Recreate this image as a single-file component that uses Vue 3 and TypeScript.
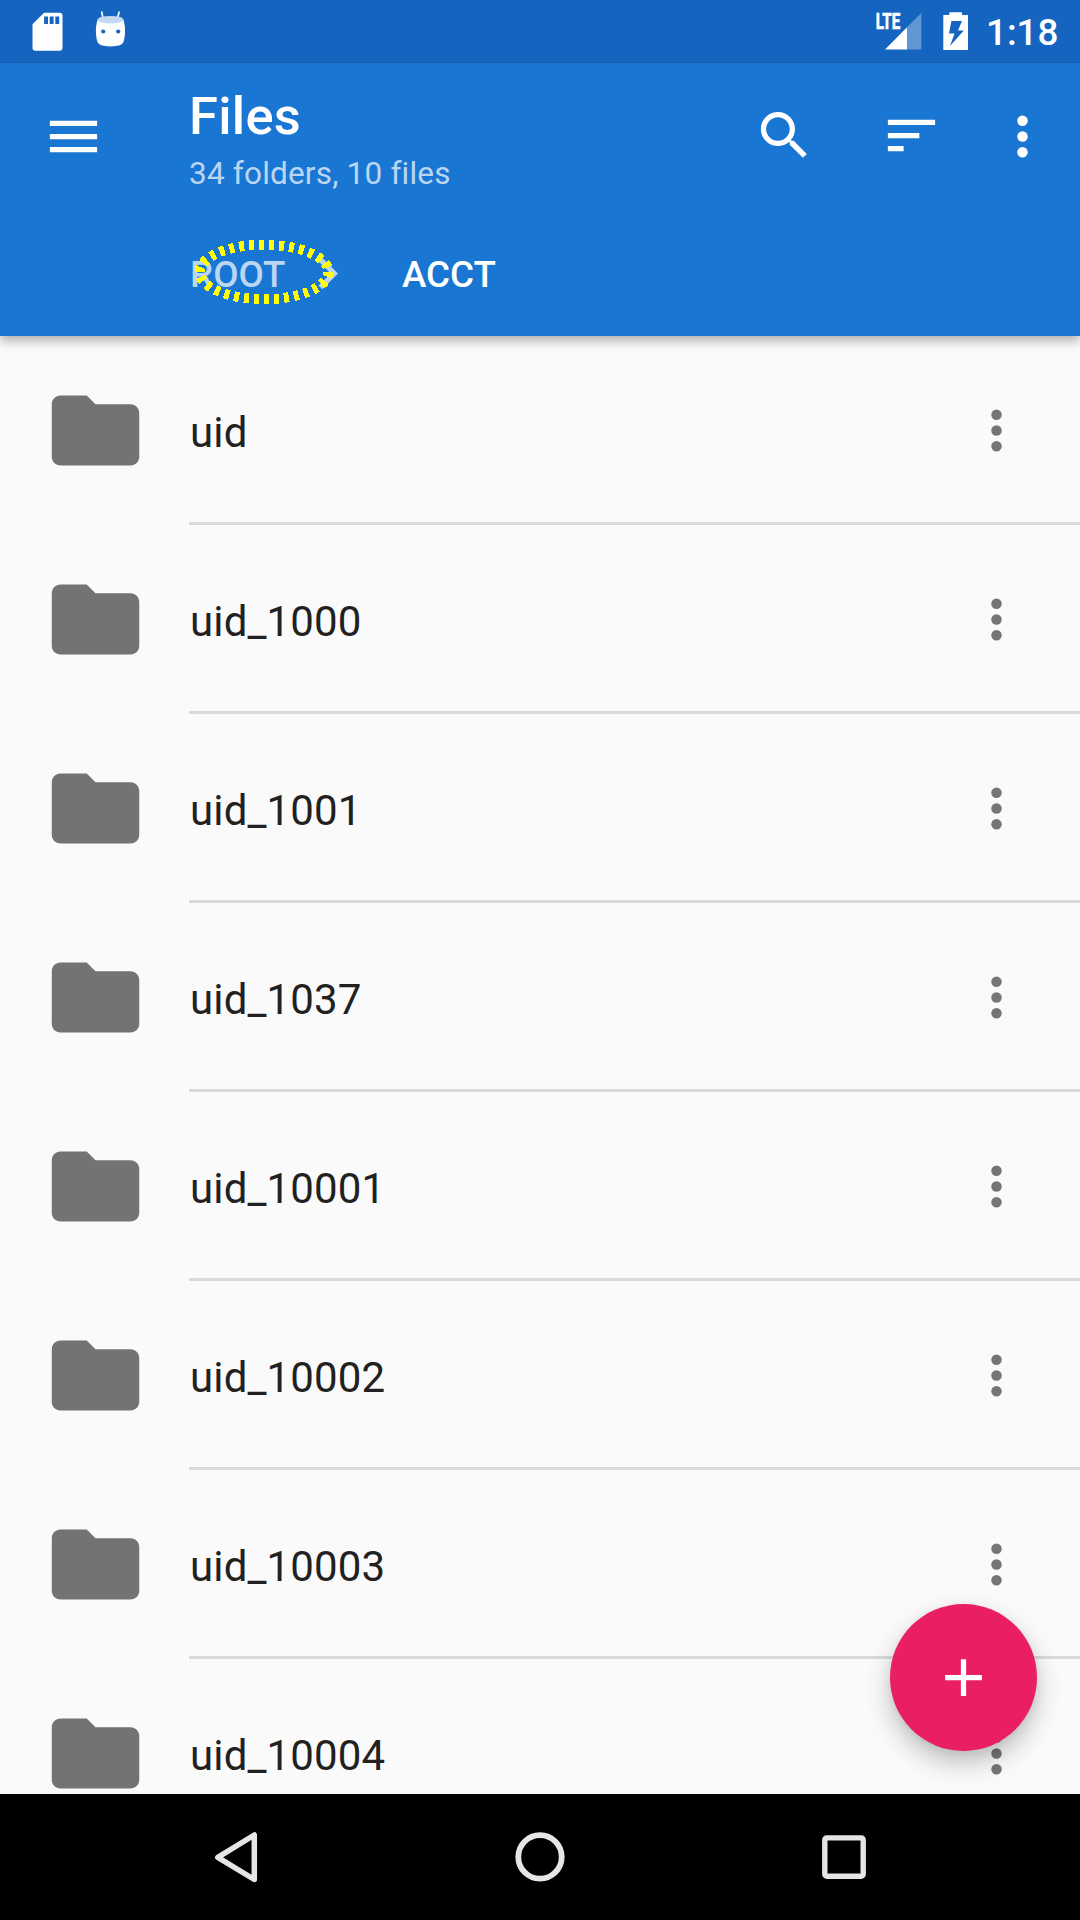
<script setup lang="ts">
const folders: string[] = [
  'uid',
  'uid_1000',
  'uid_1001',
  'uid_1037',
  'uid_10001',
  'uid_10002',
  'uid_10003',
  'uid_10004',
]
</script>

<template>
  <div class="screen">
    <div class="status">
      <svg class="sd" width="32" height="40" viewBox="-0.500 0 32 40">
        <path fill="#fff" fill-rule="evenodd" d="M12.600 .7H28q3 0 3 3v32q0 3-3 3H4q-3 0-3-3V12.300zM12.600 4.500v7.500h3.900V4.500zM18.200 4.500v7.500h3.900V4.500zM23.800 4.500v7.500h3.900V4.500z" />
      </svg>
      <svg class="droid" width="34" height="38" viewBox="-0.500 0 34 38">
        <path stroke="#fff" stroke-width="1.700" stroke-linecap="round" fill="none" d="M8.300 2.200 9.700 10M25.600 2.200 23.500 10" />
        <path fill="#fff" d="M4 10C2 16 1.800 25 4 32q1 4 13 4.500Q29 36 30 32c2.200-7 2-16 0-22z" />
        <ellipse cx="17" cy="9.800" rx="13" ry="3.800" fill="#c4d8f0" />
        <circle cx="9.700" cy="21.500" r="2.100" fill="#1565c0" />
        <circle cx="24.700" cy="21.500" r="2.100" fill="#1565c0" />
      </svg>
      <span class="grow"></span>
      <svg class="signal" width="48" height="50" viewBox="0 -10 48 50">
        <path fill="#fff" d="M11 39.500 33 17.300V39.500z" />
        <path fill="#fff" fill-opacity=".32" d="M33 17.300 47.300 3v36.500H33z" />
        <text x="1.800" y="19.300" textLength="24.500" lengthAdjust="spacingAndGlyphs" class="lte">LTE</text>
      </svg>
      <svg class="battery" width="26" height="40" viewBox="0 0 26 40">
        <path fill="#fff" fill-rule="evenodd" d="M.300 5H6.300V2.200H19V5h6v35H.300zM8.400 11 6 23.500h5.500L7 36 20.800 20.500H15L19 11z" />
      </svg>
      <span class="clock">1:18</span>
    </div>

    <header class="appbar">
      <div class="toolbar">
        <svg class="menu" width="63" height="63" viewBox="0 0 24 24" fill="#fff">
          <path d="M3 18h18v-2H3v2zm0-5h18v-2H3v2zm0-7v2h18V6H3z" />
        </svg>
        <div class="titles">
          <div class="title">Files</div>
          <div class="subtitle">34 folders, 10 files</div>
        </div>
        <svg class="search" width="63" height="63" viewBox="0 0 24 24" fill="#fff">
          <path d="M15.500 14h-.79l-.28-.27C15.410 12.590 16 11.110 16 9.500 16 5.910 13.090 3 9.500 3S3 5.910 3 9.500 5.910 16 9.500 16c1.610 0 3.090-.59 4.230-1.570l.27.28v.79l5 4.990L20.490 19l-4.990-5zm-6 0C7.010 14 5 11.990 5 9.500S7.010 5 9.500 5 14 7.010 14 9.500 11.990 14 9.500 14z" />
        </svg>
        <svg class="sort" width="63" height="63" viewBox="0 0 24 24" fill="#fff">
          <path d="M3 18h6v-2H3v2zM3 6v2h18V6H3zm0 7h12v-2H3v2z" />
        </svg>
        <svg class="overflow" width="63" height="63" viewBox="0 0 24 24" fill="#fff">
          <circle cx="12" cy="6" r="2" /><circle cx="12" cy="12" r="2" /><circle cx="12" cy="18" r="2" />
        </svg>
      </div>
      <nav class="crumbs">
        <span class="crumb parent">ROOT</span>
        <svg class="chevron" width="63" height="63" viewBox="0 0 24 24">
          <path fill="#bad6f2" d="M10 6 8.590 7.410 13.170 12l-4.580 4.590L10 18l6-6z" />
        </svg>
        <span class="crumb">ACCT</span>
        <svg class="marker" width="140" height="66" viewBox="0 0 140 66">
          <ellipse cx="70" cy="33" rx="64.500" ry="27.300" fill="none" stroke="#ff0" stroke-width="10" stroke-dasharray="5 5" shape-rendering="crispEdges" />
        </svg>
      </nav>
    </header>

    <main class="list">
      <div v-for="name in folders" :key="name" class="row">
        <svg class="folder" width="105" height="105" viewBox="0 0 24 24">
          <path fill="#737373" d="M10 4H4c-1.100 0-1.990.9-1.990 2L2 18c0 1.100.9 2 2 2h16c1.100 0 2-.9 2-2V8c0-1.100-.9-2-2-2h-8l-2-2z" />
        </svg>
        <div class="cell">
          <span class="name">{{ name }}</span>
          <svg class="more" width="63" height="63" viewBox="0 0 24 24" fill="#757575">
            <circle cx="12" cy="6" r="2" /><circle cx="12" cy="12" r="2" /><circle cx="12" cy="18" r="2" />
          </svg>
        </div>
      </div>
      <button class="fab" aria-label="Add">
        <svg width="63" height="63" viewBox="0 0 24 24" fill="#fff">
          <path d="M19 13h-6v6h-2v-6H5v-2h6V5h2v6h6v2z" />
        </svg>
      </button>
    </main>

    <footer class="navbar">
      <svg width="126" height="126" viewBox="0 0 126 126" fill="none" stroke="#e6e6e6" stroke-width="5.500" stroke-linejoin="round">
        <path d="M81.300 41v44.500L44.800 63.400z" />
      </svg>
      <svg width="126" height="126" viewBox="0 0 126 126" fill="none" stroke="#e6e6e6" stroke-width="5.800">
        <circle cx="63" cy="62.900" r="21.700" />
      </svg>
      <svg width="126" height="126" viewBox="0 0 126 126" fill="none" stroke="#e6e6e6" stroke-width="5.400">
        <rect x="43.800" y="43.900" width="38.400" height="38.400" rx="2" />
      </svg>
    </footer>
  </div>
</template>

<style>
body {
  margin: 0;
}
</style>

<style scoped>
.screen {
  width: 1080px;
  height: 1920px;
  display: flex;
  flex-direction: column;
  overflow: hidden;
  background: #fafafa;
  font-family: Roboto, "Noto Sans", sans-serif;
}
svg {
  display: block;
  flex: none;
}
.status {
  height: 63px;
  flex: none;
  display: flex;
  align-items: flex-start;
  background: #1565c0;
  color: #fff;
}
.sd {
  margin: 12px 0 0 31px;
}
.droid {
  margin: 10px 0 0 30px;
}
.grow {
  flex: 1;
}
.lte {
  font: 700 22.500px Roboto, sans-serif;
  fill: #fff;
  stroke: #fff;
  stroke-width: 0.700px;
}
.battery {
  margin: 10px 0 0 21px;
}
.clock {
  width: 94px;
  margin: 11px 0 0 17px;
  font-size: 36.750px;
  line-height: 44px;
  font-weight: 500;
}
.appbar {
  height: 273px;
  flex: none;
  position: relative;
  z-index: 1;
  background: #1976d2;
  color: #fff;
  box-shadow: 0 5px 10px rgba(0, 0, 0, 0.3);
}
.toolbar {
  height: 147px;
  display: flex;
  align-items: center;
}
.menu {
  margin-left: 42px;
}
.titles {
  width: 564px;
  margin-left: 84px;
  padding-top: 4px;
}
.title {
  font-size: 52.500px;
  line-height: 61px;
  font-weight: 500;
  letter-spacing: 0.250px;
}
.subtitle {
  font-size: 31.500px;
  line-height: 37px;
  margin-top: 8px;
  letter-spacing: 0.200px;
  color: #bad6f2;
}
.search,
.sort {
  margin-bottom: 2px;
}
.sort {
  margin-left: 64px;
}
.overflow {
  margin-left: 48px;
}
.crumbs {
  height: 126px;
  display: flex;
  align-items: center;
  padding-left: 190px;
  position: relative;
}
.crumb {
  font-size: 36.750px;
  line-height: 44px;
  padding-top: 3px;
  font-weight: 500;
}
.parent {
  width: 106px;
  color: #bad6f2;
}
.chevron {
  margin-right: 43px;
}
.marker {
  position: absolute;
  left: 194px;
  top: 29px;
}
.list {
  flex: 1;
  min-height: 0;
  overflow: hidden;
  position: relative;
}
.row {
  height: 189px;
  display: flex;
}
.folder {
  margin: 42px 0 0 43px;
}
.cell {
  flex: 1;
  box-sizing: border-box;
  height: 189px;
  margin-left: 41px;
  padding-right: 52px;
  border-bottom: 3px solid #dadada;
  display: flex;
  align-items: center;
}
.name {
  flex: 1;
  font-size: 42px;
  line-height: 50px;
  letter-spacing: 0.150px;
  color: #212121;
  padding: 8px 0 0 1px;
}
.more {
  margin-top: 3px;
}
.fab {
  position: absolute;
  right: 43px;
  bottom: 43px;
  width: 147px;
  height: 147px;
  padding: 0;
  border: 0;
  border-radius: 50%;
  background: #e91e63;
  display: flex;
  align-items: center;
  justify-content: center;
  box-shadow: 0 12px 26px rgba(0, 0, 0, 0.24), 0 3px 8px rgba(0, 0, 0, 0.06);
}
.navbar {
  height: 126px;
  flex: none;
  background: #000;
  display: flex;
  justify-content: center;
  gap: 178px;
}
</style>
